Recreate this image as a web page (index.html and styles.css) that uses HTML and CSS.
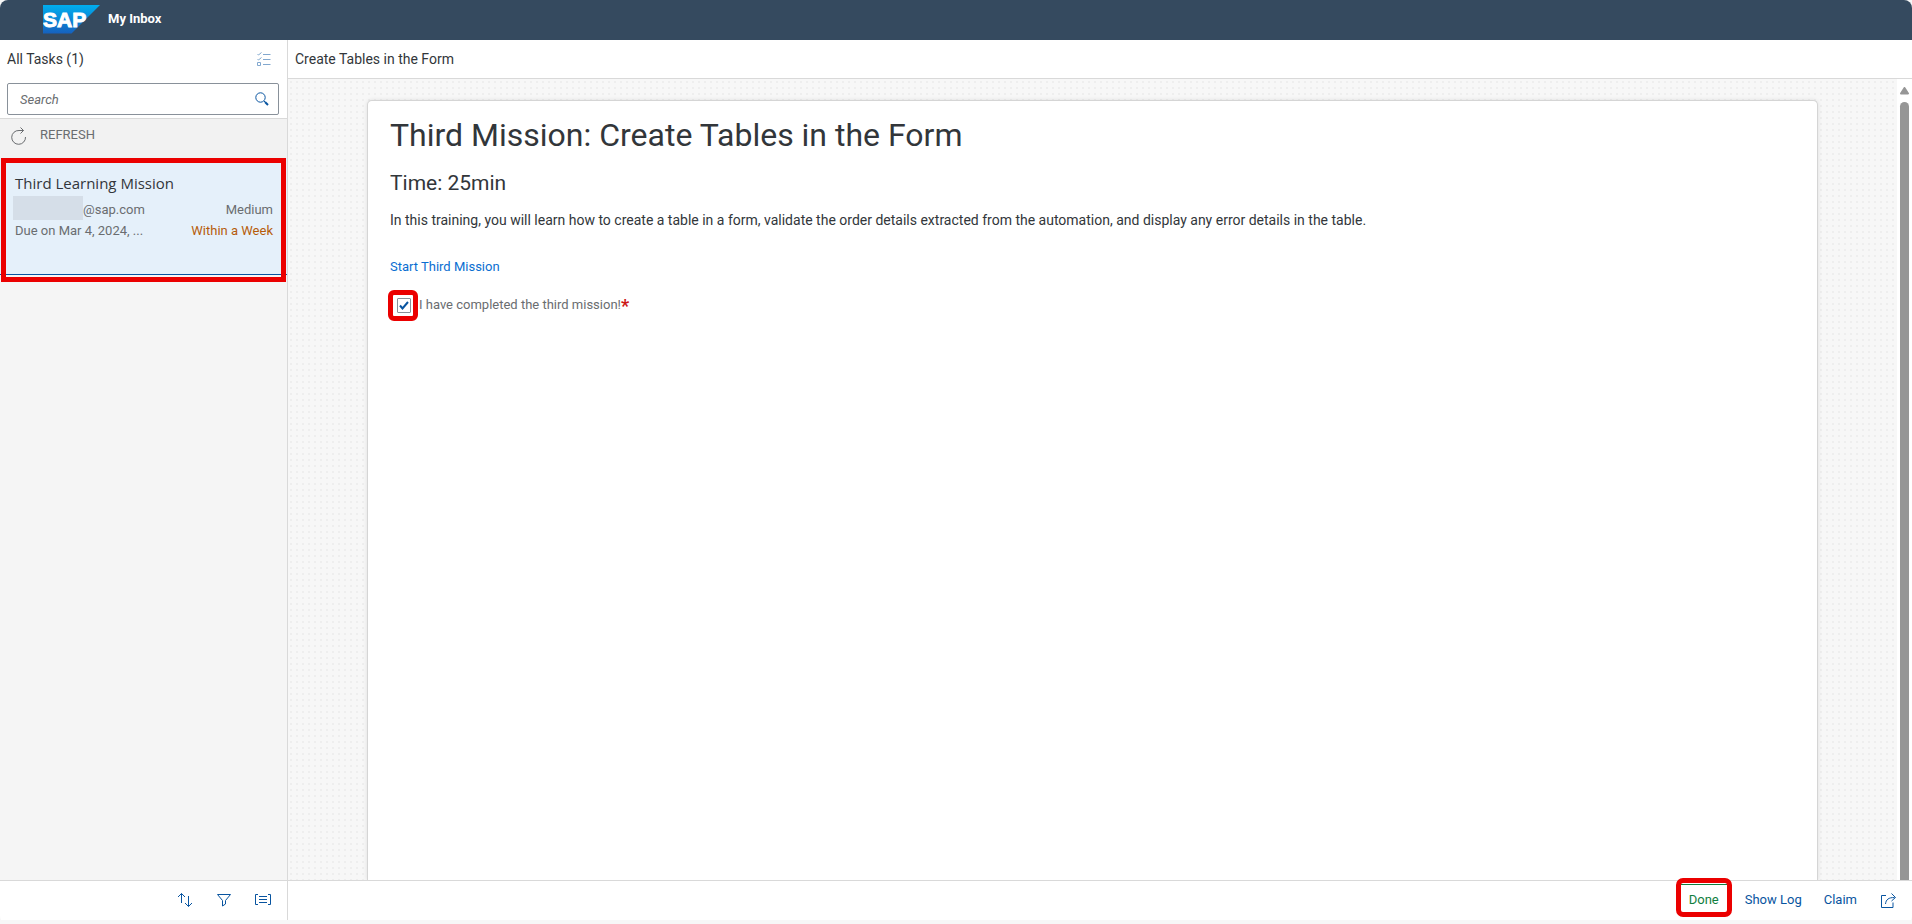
FILE: index.html
```html
<!DOCTYPE html>
<html lang="en">
<head>
<meta charset="utf-8">
<title>My Inbox</title>
<link rel="stylesheet" href="styles.css">
</head>
<body>
<div class="shell">
  <header class="shell-bar">
    <svg class="logo" width="57" height="29" viewBox="0 0 57 29" role="img" aria-label="SAP">
      <defs><linearGradient id="sap" x1="0" y1="0" x2="0" y2="1"><stop offset="0" stop-color="#00aeef"/><stop offset="1" stop-color="#1661be"/></linearGradient></defs>
      <path d="M0 0H57L28.500 28.500H0Z" fill="url(#sap)"/>
      <text class="logo-text" x="0" y="22">SAP</text>
    </svg>
    <h1 class="shell-title">My Inbox</h1>
  </header>
  <div class="columns">
    <aside class="master">
      <div class="master-head">
        <div class="master-title-row">
          <h2 class="bar-title">All Tasks (1)</h2>
          <button class="icon-btn faded" type="button" aria-label="Multi-select">
            <svg width="14" height="14" viewBox="0 0 14 14"><path d="M6 2.500h7.500M6 7.500h7.500M6 12.500h7.500M.5 2l1 1L4.500.5M.5 7l1 1L4.500 5.500M.5 10.500h3v3h-3z"/></svg>
          </button>
        </div>
        <form class="search">
          <input class="search-input" type="search" placeholder="Search" aria-label="Search">
          <button class="icon-btn" type="button" aria-label="Run search">
            <svg width="14" height="14" viewBox="0 0 14 14"><circle cx="5.500" cy="5.500" r="4.700"/><path d="M9 9l1.500 1.500"/><path d="M10 10l3 3" stroke-width="2"/></svg>
          </button>
        </form>
      </div>
      <button class="refresh" type="button">
        <svg width="16" height="18" viewBox="0 0 16 18"><path d="M14.500 10A6.900 6.900 0 1 1 8 3.500H12.500M9.500.5L12.500 3.500L9.500 6.500"/></svg>
        <span>REFRESH</span>
      </button>
      <ul class="tasks">
        <li class="task">
          <h3 class="task-title">Third Learning Mission</h3>
          <div class="task-row"><span class="user"><span class="redacted"></span>@sap.com</span><span>Medium</span></div>
          <div class="task-row"><span>Due on Mar 4, 2024, ...</span><span class="warn">Within a Week</span></div>
        </li>
      </ul>
      <footer class="footer master-foot">
        <button class="icon-btn" type="button" aria-label="Sort">
          <svg width="16" height="16" viewBox="0 0 16 16"><path d="M4.500 11V1.500M1 5l3.500-3.500L8 5M11.500 4v10.500M8 11l3.500 3.500L15 11"/></svg>
        </button>
        <button class="icon-btn" type="button" aria-label="Filter">
          <svg width="14" height="14" viewBox="0 0 14 14"><path d="M.5 1.500h13L8.500 7.500v3.500L5.500 13V7.500Z"/></svg>
        </button>
        <button class="icon-btn" type="button" aria-label="Group">
          <svg width="16" height="12" viewBox="0 0 16 12"><path d="M3 .5H.5v10H3M13 .5h2.500v10H13M4 2.500h8M4 5.500h8M4 8.500h8"/></svg>
        </button>
      </footer>
    </aside>
    <main class="detail">
      <div class="detail-head"><h2 class="bar-title">Create Tables in the Form</h2></div>
      <div class="viewport">
        <div class="canvas">
          <article class="card">
            <h1 class="card-title">Third Mission: Create Tables in the Form</h1>
            <h2 class="card-sub">Time: 25min</h2>
            <p class="card-text">In this training, you will learn how to create a table in a form, validate the order details extracted from the automation, and display any error details in the table.</p>
            <a class="link" href="#">Start Third Mission</a>
            <div class="confirm">
              <span class="check-wrap">
                <input class="check" type="checkbox" id="done" checked required>
                <svg class="tick" width="10" height="9" viewBox="0 0 10 9"><path d="M1 4.500L3.500 7.500L9 1"/></svg>
              </span>
              <label for="done">I have completed the third mission!<span class="required">*</span></label>
            </div>
          </article>
        </div>
        <div class="scrollbar">
          <svg width="9" height="8" viewBox="0 0 9 8"><path d="M4.500 1L8 6.500H1Z" fill="#969696" stroke="#969696" stroke-width="2" stroke-linejoin="round"/></svg>
          <div class="thumb"></div>
        </div>
      </div>
      <footer class="footer detail-foot">
        <button class="btn accept" type="button">Done</button>
        <button class="btn" type="button">Show Log</button>
        <button class="btn" type="button">Claim</button>
        <button class="icon-btn share" type="button" aria-label="Share">
          <svg width="15" height="15" viewBox="0 0 15 15"><path d="M5 2.500H.5v12h11.500V9.500M4.500 11C5 6.500 7.500 4.500 13.500 4.500M10.500.5L14.500 4.500L10.500 8"/></svg>
        </button>
      </footer>
    </main>
  </div>
</div>
</body>
</html>
```
FILE: styles.css
```css
* { box-sizing: border-box; }
body {
  margin: 0;
  background: #f7f7f7;
  color: #32363a;
  font-family: Roboto, "Liberation Sans", sans-serif;
  font-size: 13px;
  line-height: 20px;
}
h1, h2, h3, p, ul { margin: 0; padding: 0; font-weight: 400; }
ul { list-style: none; }
button { border: 0; padding: 0; background: none; font: inherit; color: #0854a0; cursor: pointer; }
svg { display: block; flex: none; }
.shell { display: flex; flex-direction: column; height: 100vh; padding-bottom: 4px; border-radius: 8px; overflow: hidden; }
.shell-bar { display: flex; align-items: center; flex: none; gap: 8px; height: 40px; padding: 0 43px; background: #354a5f; }
.logo { margin-bottom: 2px; }
.logo-text { fill: #fff; stroke: #fff; font: 700 21px "Liberation Sans", sans-serif; }
.shell-title { margin-bottom: 3px; color: #fff; font-size: 13px; font-weight: 700; }
.columns { display: flex; flex: 1; min-height: 0; }
.master { display: flex; flex-direction: column; flex: none; width: 288px; border-right: 1px solid #d9d9d9; background: #f5f5f5; }
.master-head { padding: 0 8px 3px 7px; border-bottom: 1px solid #d9d9d9; background: #fff; }
.master-title-row { display: flex; align-items: center; justify-content: space-between; height: 43px; padding: 0 8px 5px 0; }
.bar-title { font-size: 14px; }
.icon-btn svg { fill: none; stroke: #0854a0; }
.faded { opacity: .5; }
.search { display: flex; align-items: center; height: 32px; padding-right: 9px; border: 1px solid #89919a; border-radius: 2px; background: #fff; }
.search-input { flex: 1; min-width: 0; height: 28px; padding: 0 12px; border: 0; outline: 0; background: none; font: inherit; }
.search-input::placeholder { color: #6a6d70; font-style: italic; }
.refresh { display: flex; align-items: center; gap: 13px; height: 39px; padding: 0 11px 8px; background: #f2f2f2; color: #6a6d70; }
.refresh svg { margin-top: 2px; fill: none; stroke: #6a6d70; }
.tasks { flex: 1; }
.task { position: relative; height: 117px; padding: 15px 14px 0 15px; border-bottom: 1px solid #0854a0; background: #e5f0fa; color: #6a6d70; }
.task::after { content: ""; position: absolute; inset: 0 1px -8px 1px; border: 5px solid #eb0000; }
.task-title { margin-bottom: 6px; color: #32363a; font-family: "Open Sans", sans-serif; font-size: 15px; }
.task-row { display: flex; justify-content: space-between; align-items: center; height: 21px; }
.user { display: flex; align-items: center; }
.redacted { width: 70px; height: 24px; margin: 0 0 4px -2px; background: #d5dee8; }
.warn { color: #b65c0b; }
.footer { display: flex; align-items: center; flex: none; height: 40px; padding-bottom: 1px; border-top: 1px solid #d9d9d9; background: #fff; }
.master-foot { justify-content: flex-end; gap: 24px; padding-right: 16px; }
.detail { display: flex; flex-direction: column; flex: 1; min-width: 0; }
.detail-head { display: flex; align-items: center; flex: none; height: 39px; padding: 0 7px; border-bottom: 1px solid #d9d9d9; background: #fff; }
.viewport { display: flex; flex: 1; min-height: 0; }
.canvas {
  display: flex;
  flex: 1;
  min-width: 0;
  padding: 21px 79px 0;
  overflow: hidden;
  background: radial-gradient(circle, #eeeeee 1px, transparent 1px) 0 0 / 6px 6px #f7f7f7;
}
.card { flex: 1; padding: 14px 22px; border: 1px solid #d5d5d5; border-bottom: 0; border-radius: 5px 5px 0 0; background: #fff; box-shadow: 0 0 4px #0000001a; }
.card-title { font-size: 32px; line-height: 40px; }
.card-sub { margin-top: 14px; font-size: 21px; line-height: 28px; }
.card-text { margin: 13px 0 27px; font-size: 14px; }
.link { display: block; width: fit-content; color: #0a6ed1; text-decoration: none; }
.confirm { display: flex; align-items: center; gap: 8px; margin-top: 18px; padding-left: 7px; color: #6a6d70; }
.check-wrap { display: grid; place-items: center; position: relative; }
.check-wrap::after { content: ""; position: absolute; inset: -8px -7px -8px -9px; border: 5px solid #eb0000; border-radius: 6px; pointer-events: none; }
.check { grid-area: 1 / 1; width: 14px; height: 15px; margin: 0; appearance: none; border: 1px solid #89919a; border-radius: 1px; background: #fff; }
.tick { grid-area: 1 / 1; fill: none; stroke: #0854a0; stroke-width: 2; pointer-events: none; }
.required { color: #cc1919; font-size: 18px; font-weight: 700; line-height: 18px; vertical-align: -3px; }
.scrollbar { display: flex; flex-direction: column; align-items: center; flex: none; gap: 7px; width: 15px; padding-top: 8px; background: #fff; }
.thumb { flex: 1; width: 9px; border-radius: 5px 5px 0 0; background: #969696; }
.detail-foot { justify-content: flex-end; gap: 6px; padding-right: 16px; }
.btn { height: 32px; padding: 0 8px; border: solid transparent; border-width: 1px 0; }
.accept { position: relative; margin-right: 4px; border-top-color: #107e3e; color: #107e3e; }
.accept::after { content: ""; position: absolute; inset: -7px -5px -2px; border: 5px solid #eb0000; border-radius: 7px; }
.share { margin-left: 10px; }
```
